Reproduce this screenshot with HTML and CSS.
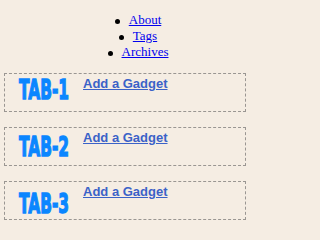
FILE: index.html
```html
<!DOCTYPE html>
<html>
<head>
<meta charset="utf-8">
<link rel="stylesheet" href="styles.css">
</head>
<body>
<div class="page">
  <ul class="nav">
    <li><a href="#">About</a></li>
    <li><a href="#">Tags</a></li>
    <li><a href="#">Archives</a></li>
  </ul>
  <div class="gadget-box">
    <span class="tab tab-1"><span class="tab-label">TAB-1</span></span>
    <a class="add-gadget" href="#">Add a Gadget</a>
  </div>
  <div class="gadget-box">
    <span class="tab tab-2"><span class="tab-label">TAB-2</span></span>
    <a class="add-gadget" href="#">Add a Gadget</a>
  </div>
  <div class="gadget-box">
    <span class="tab tab-3"><span class="tab-label">TAB-3</span></span>
    <a class="add-gadget" href="#">Add a Gadget</a>
  </div>
</div>
</body>
</html>
```

FILE: styles.css
```css
html, body {
  margin: 0;
  background: #f5ede3;
}
.page {
  width: 242px;
  padding: 12px 0 0 4px;
}
.nav {
  margin: 0 0 13px 0;
  padding: 0 0 0 26px;
  text-align: center;
  font-family: "Liberation Serif", serif;
  font-size: 13px;
  line-height: 16px;
  list-style: none;
}
.nav li::before {
  content: "";
  display: inline-block;
  width: 5px;
  height: 5px;
  border-radius: 50%;
  background: #000;
  margin-right: 9px;
  vertical-align: middle;
}
.nav a {
  color: #0000ee;
}
.gadget-box {
  box-sizing: border-box;
  height: 39px;
  border: 1px dashed #9a9692;
  margin-bottom: 15px;
  padding: 2px 0 0 14px;
  display: flex;
  align-items: flex-start;
}
.tab {
  display: block;
  width: 64px;
  height: 27px;
  flex: none;
  overflow: visible;
}
.tab-label {
  display: inline-block;
  font-family: "DejaVu Sans", sans-serif;
  font-weight: bold;
  font-size: 27px;
  line-height: 27px;
  color: #0a86ff;
  -webkit-text-stroke: 1.4px #0a86ff;
  white-space: nowrap;
  transform: scaleX(0.57);
  transform-origin: 0 0;
}
.tab-1 { margin-top: 0px; }
.tab-2 { margin-top: 3px; }
.tab-3 { margin-top: 6px; }
.add-gadget {
  font-family: "Liberation Sans", Arial, sans-serif;
  font-weight: bold;
  font-size: 13px;
  line-height: 15px;
  color: #3b62c8;
}
```
